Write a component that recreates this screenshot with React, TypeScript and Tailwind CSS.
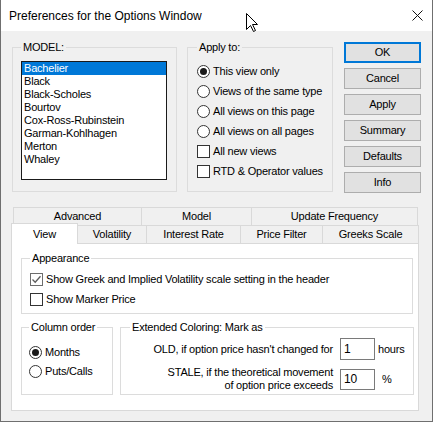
import React from 'react';

const models = ['Bachelier', 'Black', 'Black-Scholes', 'Bourtov', 'Cox-Ross-Rubinstein', 'Garman-Kohlhagen', 'Merton', 'Whaley'];
const applyTo = ['This view only', 'Views of the same type', 'All views on this page', 'All views on all pages'];
const buttons = ['OK', 'Cancel', 'Apply', 'Summary', 'Defaults', 'Info'];

const Radio: React.FC<{ checked?: boolean }> = ({ checked }) => (
  <span className="w-[13px] h-[13px] shrink-0 rounded-full border border-[#333333] bg-white flex items-center justify-center">
    {checked && <span className="w-[7px] h-[7px] rounded-full bg-[#1a1a1a]" />}
  </span>
);

const Check: React.FC<{ checked?: boolean }> = ({ checked }) => (
  <span
    className={
      checked
        ? 'w-[13px] h-[13px] shrink-0 border border-[#6d6d6d] bg-white flex items-center justify-center'
        : 'w-[13px] h-[13px] shrink-0 border border-[#333333] bg-white'
    }
  >
    {checked && (
      <svg width="11" height="11" viewBox="0 0 11 11">
        <path d="M1.5 5.5 L4.2 8.2 L9.5 2.2" fill="none" stroke="#5c5c5c" strokeWidth="1.3" />
      </svg>
    )}
  </span>
);

const App: React.FC = () => {
  return (
    <div className="relative w-[433px] h-[422px] bg-[#f0f0f0] border-x border-b border-[#6f6f6f] text-[11px] tracking-[-0.2px] text-black font-['Liberation_Sans',Arial,sans-serif] select-none overflow-hidden">
      {/* Title bar */}
      <div className="h-[31px] bg-white flex items-center justify-between pl-[8px] pr-[9px] tracking-normal">
        <span className="text-[12px]">Preferences for the Options Window</span>
        <svg width="11" height="11" viewBox="0 0 11 11">
          <path d="M0.5 0.5 L10.5 10.5 M10.5 0.5 L0.5 10.5" stroke="#111" strokeWidth="1" />
        </svg>
      </div>

      {/* Top section */}
      <div className="flex pt-[9px] pl-[11px]">
        <fieldset className="w-[165px] h-[152px] border border-[#dcdcdc]">
          <legend className="ml-[8px] px-[2px] leading-[14px]">MODEL:</legend>
          <div className="ml-[8px] mt-[7px] w-[146px] h-[119px] border border-[#1a1a1a] bg-white">
            {models.map((m, i) => (
              <div
                key={m}
                className={
                  i === 0
                    ? 'h-[13px] leading-[13px] pl-[2px] bg-[#0078d7] text-white'
                    : 'h-[13px] leading-[13px] pl-[2px]'
                }
              >
                {m}
              </div>
            ))}
          </div>
        </fieldset>

        <fieldset className="ml-[10px] w-[146px] h-[152px] border border-[#dcdcdc]">
          <legend className="ml-[9px] px-[2px] leading-[14px]">Apply to:</legend>
          <div className="mt-[7px] pl-[9px] flex flex-col">
            {applyTo.map((t, i) => (
              <div key={t} className="h-[20px] flex items-center gap-[3px]">
                <Radio checked={i === 0} />
                <span>{t}</span>
              </div>
            ))}
            <div className="h-[20px] flex items-center gap-[3px]">
              <Check />
              <span>All new views</span>
            </div>
            <div className="h-[20px] flex items-center gap-[3px]">
              <Check />
              <span>RTD &amp; Operator values</span>
            </div>
          </div>
        </fieldset>

        <div className="ml-[11px] mt-[2px] w-[77px] flex flex-col gap-[5px]">
          {buttons.map((b, i) => (
            <div
              key={b}
              className={
                i === 0
                  ? 'h-[21px] bg-[#e1e1e1] border-2 border-[#0078d7] flex items-center justify-center'
                  : 'h-[21px] bg-[#e1e1e1] border border-[#adadad] flex items-center justify-center'
              }
            >
              {b}
            </div>
          ))}
        </div>
      </div>

      {/* Tabs */}
      <div className="mt-[14px]">
        <div className="ml-[12px] flex h-[18px]">
          <div className="w-[129px] border-x border-t border-[#d9d9d9] flex items-center justify-center">Advanced</div>
          <div className="-ml-px w-[111px] border-x border-t border-[#d9d9d9] flex items-center justify-center">Model</div>
          <div className="-ml-px w-[167px] border-x border-t border-[#d9d9d9] flex items-center justify-center">Update Frequency</div>
        </div>
        <div className="ml-[10px] -mt-[2px] flex items-end h-[20px]">
          <div className="relative z-10 -mb-px w-[67px] h-[21px] bg-white border-x border-t border-[#d9d9d9] flex items-start pt-[2px] justify-center">View</div>
          <div className="-ml-px w-[70px] h-[18px] border-x border-t border-[#d9d9d9] flex items-center justify-center">Volatility</div>
          <div className="-ml-px w-[95px] h-[18px] border-x border-t border-[#d9d9d9] flex items-center justify-center">Interest Rate</div>
          <div className="-ml-px w-[83px] h-[18px] border-x border-t border-[#d9d9d9] flex items-center justify-center">Price Filter</div>
          <div className="-ml-px w-[97px] h-[18px] border-x border-t border-[#d9d9d9] flex items-center justify-center">Greeks Scale</div>
        </div>

        {/* Tab panel */}
        <div className="ml-[10px] w-[408px] h-[168px] bg-white border border-[#d9d9d9] pl-[9px] pt-[7px]">
          <fieldset className="w-[392px] h-[63px] border border-[#dcdcdc]">
            <legend className="ml-[8px] px-[2px] leading-[14px]">Appearance</legend>
            <div className="mt-[4px] pl-[8px] flex flex-col">
              <div className="h-[20px] flex items-center gap-[3px]">
                <Check checked />
                <span>Show Greek and Implied Volatility scale setting in the header</span>
              </div>
              <div className="h-[20px] flex items-center gap-[3px]">
                <Check />
                <span>Show Marker Price</span>
              </div>
            </div>
          </fieldset>

          <div className="mt-[6px] flex">
            <fieldset className="w-[92px] h-[75px] border border-[#dcdcdc]">
              <legend className="ml-[7px] px-[2px] leading-[14px]">Column order</legend>
              <div className="mt-[9px] pl-[7px] flex flex-col">
                <div className="h-[19px] flex items-center gap-[3px]">
                  <Radio checked />
                  <span>Months</span>
                </div>
                <div className="h-[19px] flex items-center gap-[3px]">
                  <Radio />
                  <span>Puts/Calls</span>
                </div>
              </div>
            </fieldset>

            <fieldset className="ml-[7px] w-[294px] h-[75px] border border-[#dcdcdc]">
              <legend className="ml-[9px] px-[2px] leading-[14px]">Extended Coloring: Mark as</legend>
              <div className="mt-[4px] flex items-center">
                <div className="w-[212px] text-right">OLD, if option price hasn't changed for</div>
                <div className="ml-[7px] w-[35px] h-[22px] border border-[#7a7a7a] bg-white pl-[3px] flex items-center text-[12px]">1</div>
                <span className="ml-[3px]">hours</span>
              </div>
              <div className="mt-[6px] flex items-center">
                <div className="w-[212px] text-right leading-[13px]">
                  STALE, if the theoretical movement
                  <br />
                  of option price exceeds
                </div>
                <div className="ml-[7px] w-[35px] h-[21px] border border-[#7a7a7a] bg-white pl-[3px] flex items-center text-[12px]">10</div>
                <span className="ml-[7px]">%</span>
              </div>
            </fieldset>
          </div>
        </div>
      </div>

      {/* Mouse cursor */}
      <svg className="absolute left-[245px] top-[13px]" width="13" height="20" viewBox="0 0 13 20">
        <path d="M0.5 0.5 L0.5 16.5 L4.5 12.5 L7.5 18.5 L9.5 17.5 L6.5 11.5 L11.5 11.5 Z" fill="white" stroke="black" strokeWidth="1" strokeLinejoin="round" />
      </svg>
    </div>
  );
};

export default App;
